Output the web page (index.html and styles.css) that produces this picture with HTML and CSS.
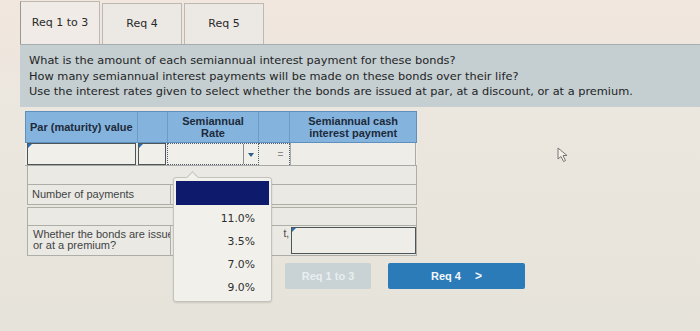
FILE: index.html
```html
<!DOCTYPE html>
<html>
<head>
<meta charset="utf-8">
<link rel="stylesheet" href="styles.css">
</head>
<body>
<div class="page">
  <div class="tabs">
    <div class="tab active">Req 1 to 3</div>
    <div class="tab">Req 4</div>
    <div class="tab">Req 5</div>
  </div>
  <div class="instructions">
    <p>What is the amount of each semiannual interest payment for these bonds?</p>
    <p>How many semiannual interest payments will be made on these bonds over their life?</p>
    <p>Use the interest rates given to select whether the bonds are issued at par, at a discount, or at a premium.</p>
  </div>
  <div class="work">
    <div class="table">
      <div class="row head">
        <div class="c c1">Par (maturity) value</div>
        <div class="c c2"></div>
        <div class="c c3">Semiannual<br>Rate</div>
        <div class="c c4"></div>
        <div class="c c5">Semiannual cash<br>interest payment</div>
      </div>
      <div class="row inputs">
        <div class="c c1"><span class="inp flag"></span></div>
        <div class="c c2"><span class="inp flag"></span></div>
        <div class="c c3 sel"><span class="arrow"></span></div>
        <div class="c c4 eq">=</div>
        <div class="c c5"></div>
      </div>
      <div class="row blank"></div>
      <div class="row label">
        <div class="lab">Number of payments</div>
        <div class="rest"></div>
      </div>
      <div class="row blank gap"></div>
      <div class="row label tall">
        <div class="lab">Whether the bonds are issued at par, at a discount,<br>or at a premium?</div>
        <div class="mid">t,</div>
        <div class="ans"><span class="flag"></span></div>
      </div>
    </div>
    <div class="buttons">
      <div class="btn prev">Req 1 to 3</div>
      <div class="btn next">Req 4 <span class="chev">&gt;</span></div>
    </div>
    <div class="dropdown">
      <div class="opt selected"></div>
      <div class="opt">11.0%</div>
      <div class="opt">3.5%</div>
      <div class="opt">7.0%</div>
      <div class="opt">9.0%</div>
    </div>
    <svg class="cursor" width="12" height="16" viewBox="0 0 12 16"><path d="M1 1 L1 12 L4 9.5 L6.5 14.5 L8.5 13.5 L6 8.5 L10 8.5 Z" fill="#f4f1ea" stroke="#6a6a6a" stroke-width="0.9" stroke-linejoin="round"/></svg>
  </div>
</div>
</body>
</html>
```
FILE: styles.css
```css
html, body {
  margin: 0;
  padding: 0;
}
body {
  width: 700px;
  height: 331px;
  overflow: hidden;
  background: linear-gradient(180deg, #f1e7df 0px, #efe6de 44px, #ebe7df 110px, #e6e3da 331px);
  font-family: "DejaVu Sans", Verdana, sans-serif;
}
.page {
  padding-left: 20px;
  position: relative;
  height: 331px;
}
.tabs {
  display: flex;
  height: 44px;
  align-items: flex-end;
  gap: 2px;
}
.tab {
  width: 80px;
  height: 41px;
  box-sizing: border-box;
  border: 1px solid #bdb8b2;
  border-bottom: none;
  background: #ece8e3;
  color: #2a2a2a;
  font-size: 11px;
  display: flex;
  align-items: center;
  justify-content: center;
  padding-bottom: 1px;
}
.tab.active {
  background: #f0ebe6;
  height: 43px;
  border-left-color: #9a9690;
}
.instructions {
  background: #c5cfd1;
  border-top: 1px solid #a7adae;
  height: 63px;
  box-sizing: border-box;
  padding: 8px 9px;
  color: #1e2426;
  font-size: 11.35px;
}
.instructions p {
  margin: 0;
  line-height: 15.5px;
}
.work {
  position: relative;
  padding: 4px 0 0 5px;
}
.table {
  width: 392px;
  font-family: "Liberation Sans", Arial, sans-serif;
}
.row {
  display: flex;
}
.head {
  height: 32px;
  background: #84b4de;
  border: 1px solid #5f8fbd;
  box-sizing: border-box;
}
.head .c {
  font-weight: bold;
  font-size: 11px;
  color: #1d2a3a;
  display: flex;
  align-items: center;
  justify-content: center;
  text-align: center;
  line-height: 12px;
  border-right: 1px solid #6d9bc6;
}
.head .c1 {
  justify-content: flex-start;
  padding-left: 4px;
}
.head .c5 { border-right: none; }
.c { box-sizing: border-box; }
.c1 { width: 112px; }
.c2 { width: 30px; }
.c3 { width: 92px; }
.c4 { width: 31px; }
.c5 { width: 126px; }
.inputs {
  height: 23px;
  background: #efede7;
  border-bottom: 1px solid #a9a9a5;
  box-sizing: border-box;
}
.inputs .c {
  position: relative;
  padding: 0 1px;
}
.inputs .c1 { padding-left: 2px; }
.inp {
  display: block;
  height: 100%;
  box-sizing: border-box;
  border: 1.5px solid #4c5558;
  border-top-width: 1px;
  background: #f1efea;
  position: relative;
}
.flag::before {
  content: "";
  position: absolute;
  left: 0;
  top: 0;
  border-left: 4px solid #2d6fb0;
  border-bottom: 4px solid transparent;
}
.inputs .sel {
  border: 1.5px dotted #4d5f70;
  background: #f1efea;
  position: relative;
}
.arrow {
  position: absolute;
  right: 0;
  top: 0;
  bottom: 0;
  width: 14px;
  border-left: 1px solid #8d8d8d;
}
.arrow::after {
  content: "";
  position: absolute;
  left: 4px;
  top: 9px;
  border-left: 3px solid transparent;
  border-right: 3px solid transparent;
  border-top: 4px solid #2f5e86;
}
.inputs .c4 {
  border-right: 1px dotted #4d5f70;
  border-top: 1px dotted #4d5f70;
}
.eq {
  display: flex;
  align-items: center;
  justify-content: center;
  font-size: 10px;
  color: #8a8a8a;
  padding-left: 14px !important;
}
.inputs .c5 { border-left: 1px solid #a9a9a5; border-right: 1px solid #a9a9a5; }
.blank {
  height: 19px;
  margin-left: 2px;
  border: 1px solid #aeaea9;
  border-top: none;
  box-sizing: border-box;
  background: #ebe9e3;
}
.blank.gap { margin-top: 2px; border-top: 1px solid #aeaea9; height: 19px; }
.label {
  height: 20px;
  margin-left: 2px;
  border: 1px solid #aeaea9;
  border-top: none;
  box-sizing: border-box;
  background: #ebe9e3;
}
.lab {
  width: 143px;
  flex: none;
  box-sizing: border-box;
  border-right: 1px solid #aeaea9;
  font-size: 11px;
  color: #3f4446;
  padding: 4px 0 0 4px;
  line-height: 11px;
  white-space: nowrap;
  overflow: hidden;
}
.rest { flex: 1; }
.tall {
  height: 30px;
}
.tall .lab {
  padding-top: 3px;
  padding-left: 5px;
  color: #3f4446;
}
.mid {
  width: 118px;
  flex: none;
  text-align: right;
  font-size: 10px;
  color: #444;
  padding-top: 2px;
  box-sizing: border-box;
}
.ans {
  flex: 1;
  margin: 1px 0 1px 2px;
  border: 1.5px solid #4c5558;
  box-sizing: border-box;
  position: relative;
  background: #efede8;
}
.buttons {
  display: flex;
  gap: 17px;
  margin: 7px 0 0 260px;
}
.btn {
  height: 26px;
  border-radius: 2px;
  display: flex;
  align-items: center;
  justify-content: center;
  font-family: "Liberation Sans", Arial, sans-serif;
  font-weight: bold;
  font-size: 11px;
}
.prev {
  width: 86px;
  background: #c9d3d6;
  color: #e8eef0;
}
.next {
  width: 137px;
  background: #2b7bb9;
  color: #f3f7fb;
  gap: 14px;
}
.chev { font-size: 12px; }
.dropdown {
  position: absolute;
  left: 153px;
  top: 70px;
  width: 99px;
  height: 125px;
  box-sizing: border-box;
  background: #f2f0eb;
  border: 1px solid #c4c2bd;
  border-radius: 3px;
  padding: 3px 2px 0;
  font-size: 10.8px;
  color: #2d2f30;
  box-shadow: 0 1px 2px rgba(0,0,0,0.12);
}
.dropdown::before {
  content: "";
  position: absolute;
  left: 14px;
  top: -5px;
  width: 8px;
  height: 8px;
  background: #f2f0eb;
  border-left: 1px solid #c4c2bd;
  border-top: 1px solid #c4c2bd;
  transform: rotate(45deg);
}
.opt {
  height: 23px;
  display: flex;
  align-items: center;
  justify-content: flex-end;
  padding-right: 14px;
  position: relative;
}
.opt.selected {
  height: 24px;
  background: #0e1a6c;
  margin-bottom: 2px;
}
.cursor {
  position: absolute;
  left: 537px;
  top: 40px;
}
```
